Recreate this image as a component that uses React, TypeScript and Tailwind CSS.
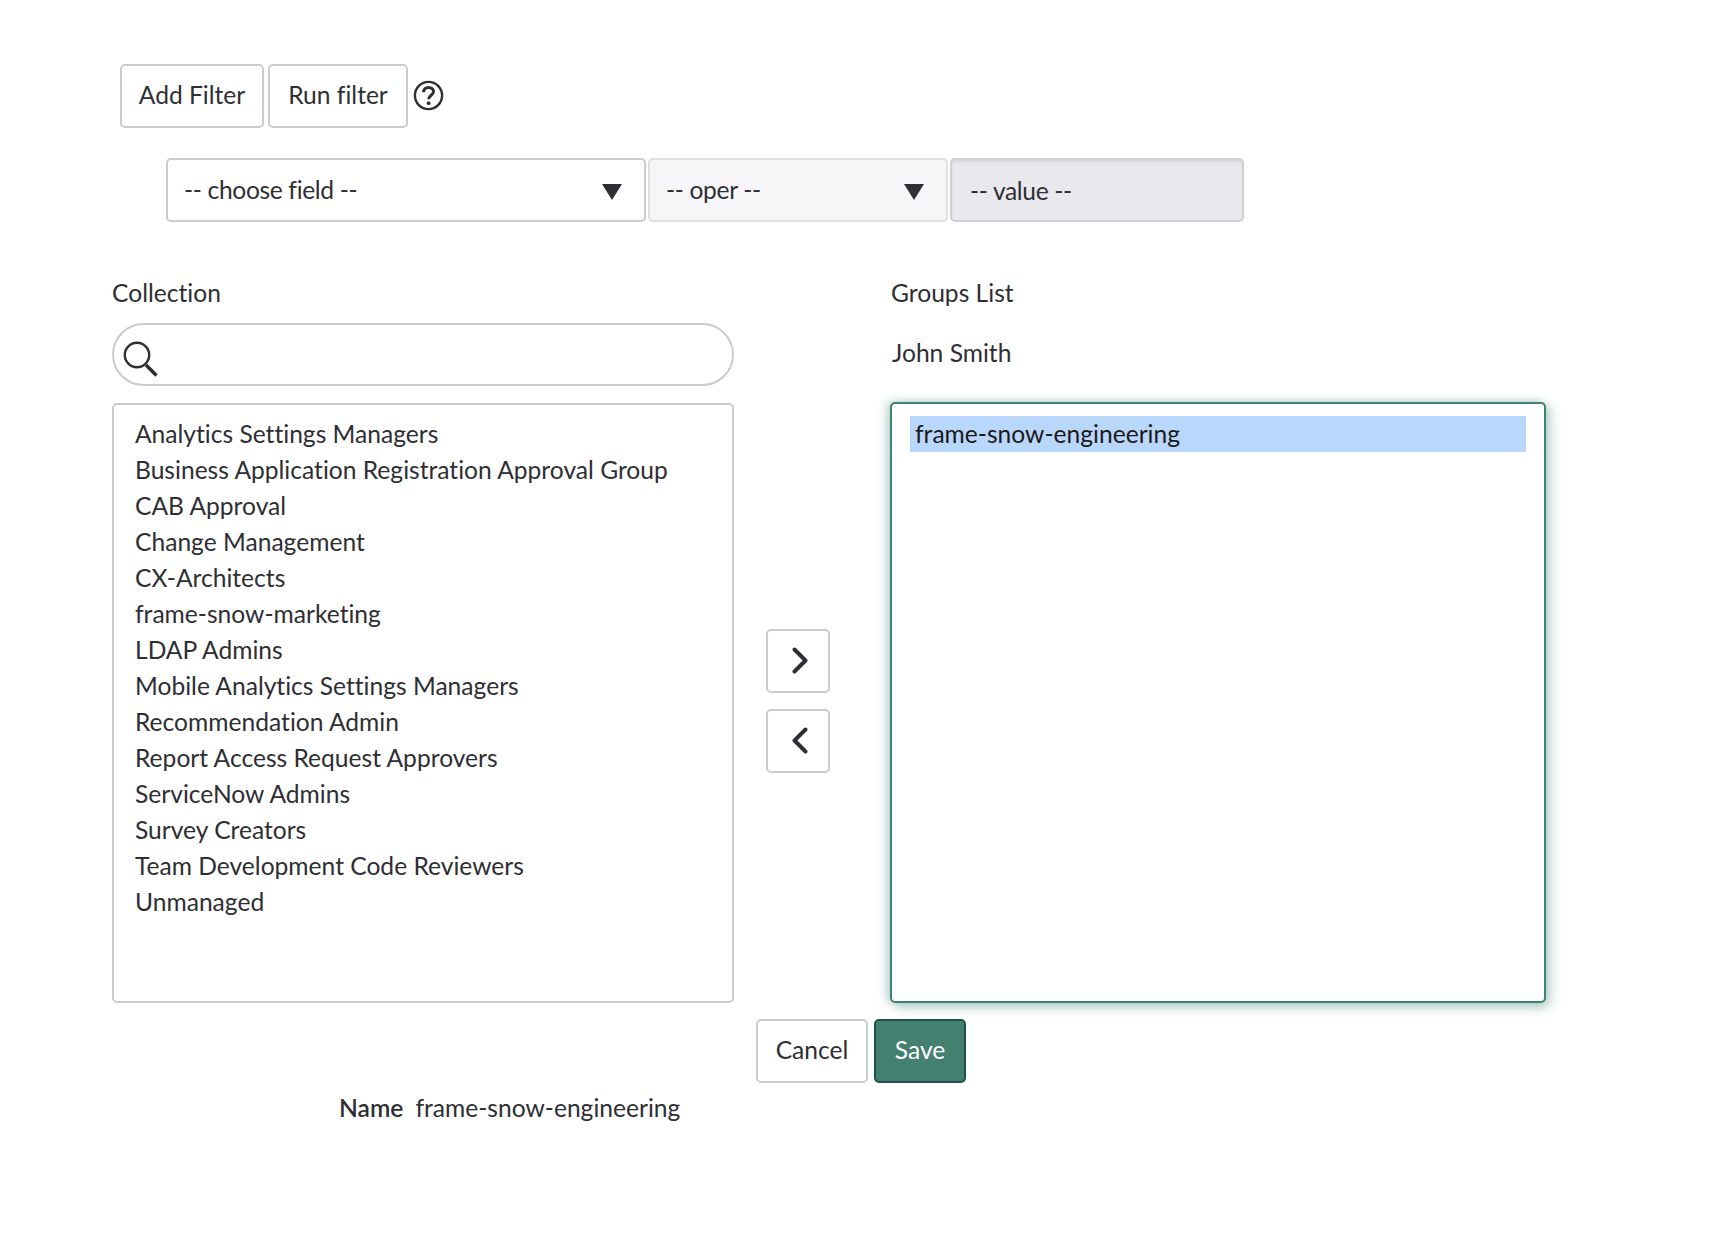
const collection = [
  "Analytics Settings Managers",
  "Business Application Registration Approval Group",
  "CAB Approval",
  "Change Management",
  "CX-Architects",
  "frame-snow-marketing",
  "LDAP Admins",
  "Mobile Analytics Settings Managers",
  "Recommendation Admin",
  "Report Access Request Approvers",
  "ServiceNow Admins",
  "Survey Creators",
  "Team Development Code Reviewers",
  "Unmanaged",
];

function Caret() {
  return (
    <svg width="20" height="16" viewBox="0 0 20 16" className="mt-[4px] shrink-0">
      <path d="M0 0H20L10 16Z" fill="#2e2e33" />
    </svg>
  );
}

function HelpIcon() {
  return (
    <svg width="31" height="31" viewBox="0 0 31 31" fill="none" stroke="#2e2e33">
      <circle cx="15.5" cy="15.5" r="13.6" strokeWidth="2.4" />
      <path d="M10.6 12.2c0-2.9 2.1-4.8 5-4.8s4.9 1.7 4.9 4.2c0 3.7-4.9 3.6-4.9 7.6" strokeWidth="3" />
      <circle cx="15.6" cy="23.2" r="1.9" fill="#2e2e33" stroke="none" />
    </svg>
  );
}

function SearchIcon() {
  return (
    <svg width="36" height="36" viewBox="0 0 36 36" fill="none" stroke="#2e2e33">
      <circle cx="14" cy="14" r="12.2" strokeWidth="2.4" />
      <path d="M23 24L33.5 34.5" strokeWidth="3.6" />
    </svg>
  );
}

function Chevron({ dir }: { dir: "left" | "right" }) {
  return (
    <svg width="16" height="27" viewBox="0 0 16 27" fill="none" stroke="#2e2e33" strokeWidth="4" strokeLinecap="round" strokeLinejoin="round">
      <path d={dir === "right" ? "M2.5 2.5L13.5 13.5L2.5 24.5" : "M13.5 2.5L2.5 13.5L13.5 24.5"} />
    </svg>
  );
}

export default function App() {
  return (
    <div className="h-[1236px] w-[1728px] overflow-hidden bg-white pt-[64px] pl-[112px] font-['Lato','Liberation_Sans',sans-serif] text-[24.6px] text-[#2e2e33] [font-variant-ligatures:none]">
      <div className="ml-[8px] flex h-[64px] items-center">
        <button className="h-full w-[144px] rounded-[5px] border-2 border-[#cbcbcd] bg-white pb-[2px]">Add Filter</button>
        <button className="ml-[4px] h-full w-[140px] rounded-[5px] border-2 border-[#cbcbcd] bg-white pb-[2px]">Run filter</button>
        <span className="ml-[5px] -mt-[2px]">
          <HelpIcon />
        </span>
      </div>

      <div className="mt-[30px] ml-[54px] flex h-[64px]">
        <div className="flex w-[480px] items-center justify-between rounded-[5px] border-2 border-[#cbcbcd] bg-white pr-[22px] pl-[16px]">
          <span className="tracking-[-0.35px]">-- choose field --</span>
          <Caret />
        </div>
        <div className="ml-[2px] flex w-[300px] items-center justify-between rounded-[5px] border-2 border-[#dfdfe2] bg-[#f6f6f8] pr-[22px] pl-[16px]">
          <span className="tracking-[-0.35px]">-- oper --</span>
          <Caret />
        </div>
        <div className="ml-[2px] flex w-[294px] items-center rounded-[5px] border-2 border-[#d0d0d4] bg-[#e9e9ed] pl-[18px] shadow-[inset_0_2px_2px_rgba(0,0,0,0.08)]">
          <span className="mt-[2px] tracking-[-0.35px]">-- value --</span>
        </div>
      </div>

      <div className="mt-[52px] flex items-start">
        <div className="w-[622px]">
          <div className="flex h-[38px] items-center pt-[1px]">Collection</div>
          <div className="mt-[11px] flex h-[63px] items-center rounded-full border-2 border-[#cbcbcd] bg-white pl-[9px]">
            <span className="mt-[9px]">
              <SearchIcon />
            </span>
          </div>
          <div className="mt-[17px] h-[600px] rounded-[5px] border-2 border-[#cbcbcd] bg-white pt-[11px] pl-[21px]">
            {collection.map((name) => (
              <div key={name} className="flex h-[36px] items-center whitespace-nowrap">
                {name}
              </div>
            ))}
          </div>
        </div>

        <div className="mt-[355px] ml-[32px] flex w-[64px] flex-col gap-[16px]">
          <button className="flex h-[64px] items-center justify-center rounded-[5px] border-2 border-[#cbcbcd] bg-white pb-[2px] pl-[4px]">
            <Chevron dir="right" />
          </button>
          <button className="flex h-[64px] items-center justify-center rounded-[5px] border-2 border-[#cbcbcd] bg-white pb-[2px] pl-[4px]">
            <Chevron dir="left" />
          </button>
        </div>

        <div className="ml-[60px] w-[656px]">
          <div className="flex h-[38px] items-center pt-[1px] pl-[1px]">Groups List</div>
          <div className="mt-[22px] flex h-[38px] items-center pt-[1px] pl-[2px]">John Smith</div>
          <div className="mt-[30px] h-[601px] rounded-[5px] border-[2.5px] border-[#3f8272] bg-white px-[18px] pt-[12px] shadow-[4px_4px_12px_rgba(63,130,114,0.4),-4px_-1px_10px_rgba(63,130,114,0.28)]">
            <div className="flex h-[36px] items-center bg-[#b9d6fb] pl-[5px] text-[#1a1a1a]">frame-snow-engineering</div>
          </div>
        </div>
      </div>

      <div className="mt-[16px] ml-[644px] flex h-[64px] gap-[6px]">
        <button className="w-[112px] rounded-[5px] border-2 border-[#cbcbcd] bg-white pb-[2px]">Cancel</button>
        <button className="w-[92px] rounded-[5px] border-2 border-[#1f5248] bg-[#43806f] pb-[2px] text-white">Save</button>
      </div>

      <div className="mt-[6px] ml-[227px] flex h-[38px] items-center whitespace-nowrap">
        <span className="font-semibold">Name</span>
        <span className="ml-[12px]">frame-snow-engineering</span>
      </div>
    </div>
  );
}
